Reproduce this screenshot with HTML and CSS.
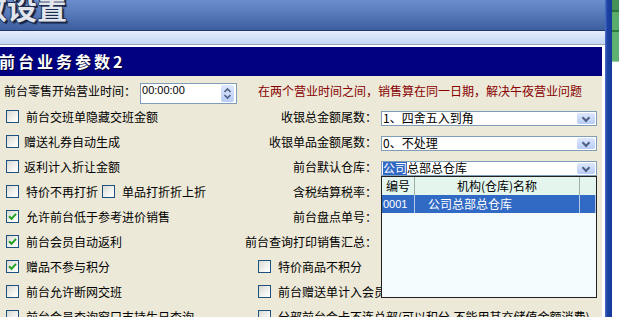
FILE: index.html
```html
<!DOCTYPE html>
<html lang="zh-CN">
<head>
  <meta charset="UTF-8" />
  <title>参数设置</title>
  <link rel="stylesheet" href="styles.css">
</head>
<body>
  <div class="screen">
    <div class="main">
      <!-- 顶部标题 -->
      <header class="banner"><h1 class="banner-title">参数设置</h1></header>
      <div class="subbar"></div>

      <div class="panel">
        <h2 class="section-title">前台业务参数2</h2>

        <div class="form">
          <div class="row-first">
            <span class="label">前台零售开始营业时间：</span>
            <div class="time-box">
              <span class="time-text">00:00:00</span>
              <span class="spin">
                <svg width="13" height="17" viewBox="0 0 13 17">
                  <polyline points="3.5,7 6.5,4 9.5,7" fill="none" stroke="#4d6185" stroke-width="1.6"/>
                  <polyline points="3.5,10 6.5,13 9.5,10" fill="none" stroke="#4d6185" stroke-width="1.6"/>
                </svg>
              </span>
            </div>
            <span class="note">在两个营业时间之间，销售算在同一日期，解决午夜营业问题</span>
          </div>

          <div class="grid">
            <!-- 第1行 -->
            <div class="check"><span class="cb"></span>前台交班单隐藏交班金额</div>
            <div class="field"><span class="field-label">收银总金额尾数：</span>
              <div class="combo"><span class="combo-text">1、四舍五入到角</span><span class="combo-btn"></span></div>
            </div>

            <div class="check tight"><span class="cb"></span>赠送礼券自动生成</div>
            <div class="field"><span class="field-label">收银单品金额尾数：</span>
              <div class="combo"><span class="combo-text">0、不处理</span><span class="combo-btn"></span></div>
            </div>

            <div class="check tight"><span class="cb"></span>返利计入折让金额</div>
            <div class="field"><span class="field-label">前台默认仓库：</span>
              <div class="combo">
                <span class="combo-text"><span class="sel">公司</span>总部总仓库</span><span class="combo-btn"></span>
                <!-- 下拉列表 -->
                <div class="popup">
                  <div class="popup-head">
                    <span class="pc">编号</span><span class="pc">机构(仓库)名称</span><span class="pc"></span>
                  </div>
                  <div class="popup-row active">
                    <span class="pc code">0001</span><span class="pc name">公司总部总仓库</span><span class="pc"></span>
                  </div>
                </div>
              </div>
            </div>

            <div class="check"><span class="cb"></span>特价不再打折<span class="cb second"></span>单品打折折上折</div>
            <div class="field"><span class="field-label">含税结算税率：</span>
              <div class="combo"></div>
            </div>

            <div class="check"><span class="cb on"><svg width="9" height="9" viewBox="0 0 9 9"><path d="M1 4.3 L3.5 6.8 L8 1.8" fill="none" stroke="#21a121" stroke-width="2"/></svg></span>允许前台低于参考进价销售</div>
            <div class="field"><span class="field-label">前台盘点单号：</span>
              <div class="combo"></div>
            </div>

            <div class="check"><span class="cb on"><svg width="9" height="9" viewBox="0 0 9 9"><path d="M1 4.3 L3.5 6.8 L8 1.8" fill="none" stroke="#21a121" stroke-width="2"/></svg></span>前台会员自动返利</div>
            <div class="field"><span class="field-label">前台查询打印销售汇总：</span>
              <div class="combo"></div>
            </div>

            <div class="check"><span class="cb on"><svg width="9" height="9" viewBox="0 0 9 9"><path d="M1 4.3 L3.5 6.8 L8 1.8" fill="none" stroke="#21a121" stroke-width="2"/></svg></span>赠品不参与积分</div>
            <div class="check right"><span class="cb"></span>特价商品不积分</div>

            <div class="check"><span class="cb"></span>前台允许断网交班</div>
            <div class="check right"><span class="cb"></span>前台赠送单计入会员积分</div>

            <div class="check"><span class="cb"></span>前台会员查询窗口支持生日查询</div>
            <div class="check right"><span class="cb"></span>分部前台会卡不连总部(可以积分,不能用其充储值金额消费)</div>
          </div>
        </div>
      </div>
    </div>
    <div class="edge"></div>
    <div class="side"></div>
  </div>
</body>
</html>
```

FILE: styles.css
```css
html, body {
  margin: 0;
  height: 100%;
}

body {
  font-family: "Noto Sans CJK SC", sans-serif;
  font-size: 12px;
  color: #000;
  background: #fff;
  overflow: hidden;
}

.screen {
  display: flex;
  width: 619px;
  height: 317px;
  overflow: hidden;
}

.main {
  width: 605px;
  flex: none;
  display: flex;
  flex-direction: column;
  background: #fff;
}

/* 顶部蓝色标题栏 */
.banner {
  flex: none;
  height: 30px;
  border-bottom: 1px solid #1f3768;
  background: linear-gradient(#6a8ecd, #5275b6 55%, #3d5e9e);
  overflow: hidden;
}

.banner-title {
  margin: -9px 0 0 -53px;
  font-size: 30px;
  line-height: 30px;
  font-weight: bold;
  color: #e2e6ec;
  white-space: nowrap;
  text-shadow: 1px 0 0 #1b2c52, -1px 0 0 #1b2c52, 0 1px 0 #1b2c52, 0 -1px 0 #1b2c52, 2px 2px 1px #14213f;
}

.subbar {
  flex: none;
  height: 13px;
  border-bottom: 1px solid #97a3b6;
  background: linear-gradient(#e4eefc, #c3d7f4);
}

.panel {
  flex: 1;
  min-height: 0;
  display: flex;
  flex-direction: column;
  padding: 2px 3px 0 0;
}

.section-title {
  flex: none;
  margin: 0;
  height: 29px;
  line-height: 29px;
  background: #000080;
  color: #fff;
  font-size: 16px;
  font-weight: bold;
  letter-spacing: 3px;
  text-indent: -1px;
  text-shadow: 1px 1px 0 #000030;
}

.form {
  flex: 1;
  background: #ece9d8;
  padding-top: 6px;
}

/* 营业时间行 */
.row-first {
  display: flex;
  align-items: flex-start;
  height: 22px;
  white-space: nowrap;
}

.row-first .label {
  padding-left: 4px;
  line-height: 18px;
}

.time-box {
  display: flex;
  justify-content: space-between;
  box-sizing: border-box;
  width: 97px;
  height: 21px;
  margin: 1px 0 0 4px;
  border: 1px solid #7f9db9;
  background: #fff;
}

.time-text {
  padding-left: 1px;
  font-family: "Liberation Sans", Arial, sans-serif;
  font-size: 11px;
  line-height: 13px;
}

.spin {
  width: 13px;
  height: 17px;
  margin: 1px 2px 0 0;
  border-radius: 2px;
  background: linear-gradient(#dfe8fd, #b9ccf5);
}

.spin svg {
  display: block;
}

.note {
  margin-left: 21px;
  line-height: 18px;
  color: #880000;
}

/* 两列参数 */
.grid {
  display: grid;
  grid-template-columns: 244px 1fr;
  grid-auto-rows: 25px;
}

.check {
  display: flex;
  align-items: center;
  gap: 7px;
  padding-left: 6px;
  white-space: nowrap;
}

.check.tight {
  gap: 5px;
}

.check.right {
  padding-left: 14px;
}

.cb {
  flex: none;
  display: flex;
  align-items: center;
  justify-content: center;
  box-sizing: border-box;
  width: 13px;
  height: 13px;
  border: 1px solid #1c5180;
  background: linear-gradient(135deg, #d9d9d3, #f7f7f5 70%, #fff);
}

.cb.second {
  margin-left: -3px;
}

.cb svg {
  display: block;
}

.field {
  display: flex;
  align-items: flex-start;
  white-space: nowrap;
}

.field-label {
  width: 133px;
  text-align: right;
  line-height: 25px;
}

.combo {
  position: relative;
  display: flex;
  box-sizing: border-box;
  width: 216px;
  height: 15px;
  margin: 7px 0 0 4px;
  border: 1px solid #7f9db9;
  background: #fff;
}

.combo-text {
  flex: 1;
  padding-left: 1px;
  line-height: 11px;
  white-space: nowrap;
}

.sel {
  display: inline-block;
  height: 13px;
  line-height: 12px;
  background: #316ac5;
  color: #fff;
}

.combo-btn {
  width: 18px;
  height: 11px;
  margin: 1px 1px 0 0;
  border-radius: 2px;
  background: linear-gradient(#dde7fd, #b9ccf5);
  position: relative;
}

.combo-btn::after {
  content: "";
  position: absolute;
  left: 6px;
  top: 2px;
  width: 4px;
  height: 4px;
  border-right: 2px solid #4d6185;
  border-bottom: 2px solid #4d6185;
  transform: rotate(45deg);
}

/* 下拉列表 */
.popup {
  position: absolute;
  top: 14px;
  left: -1px;
  z-index: 2;
  box-sizing: border-box;
  width: 216px;
  height: 122px;
  border: 1px solid #202020;
  background: #f4fbfc;
}

.popup-head,
.popup-row {
  display: grid;
  grid-template-columns: 33px 165px 1fr;
}

.popup-head {
  height: 18px;
  line-height: 18px;
  background: #e3f5ed;
  text-align: center;
}

.popup-head .pc {
  border-right: 1px solid #9fb0aa;
}

.popup-row {
  height: 18px;
  line-height: 18px;
}

.popup-row.active {
  background: #316ac5;
  color: #fff;
}

.popup-row.active .pc {
  border-right: 1px solid #b6c9ea;
}

.pc:last-child {
  border-right: none;
}

.pc.code {
  padding-left: 1px;
  font-family: "Liberation Sans", Arial, sans-serif;
  font-size: 11px;
}

.pc.name {
  padding-left: 13px;
}

/* 右侧窗口边框 */
.edge {
  flex: none;
  width: 7px;
  background: linear-gradient(to right, #4a6fc6, #1c42a2 35%, #163a9a);
}

.side {
  flex: none;
  width: 7px;
  background: linear-gradient(#44925a 0 10px, #2f7440 10px 12px, #5aac6a 12px 30px, #2f7a3e 30px 32px, #5fb170 32px 61px, #9acba6 61px 62px, #fff 62px);
}
```
